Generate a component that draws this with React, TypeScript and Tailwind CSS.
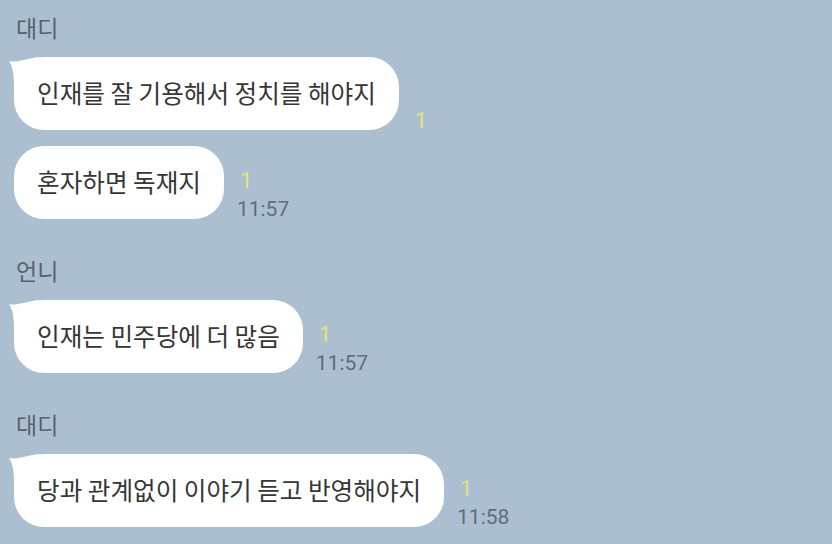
const font = { fontFamily: '"Noto Sans CJK KR", "Noto Sans", sans-serif' };

type Msg = { text: string; time?: string; tail?: boolean };
type Group = { name: string; msgs: Msg[] };

const groups: Group[] = [
  {
    name: "대디",
    msgs: [
      { text: "인재를 잘 기용해서 정치를 해야지", tail: true },
      { text: "혼자하면 독재지", time: "11:57" },
    ],
  },
  {
    name: "언니",
    msgs: [{ text: "인재는 민주당에 더 많음", time: "11:57", tail: true }],
  },
  {
    name: "대디",
    msgs: [{ text: "당과 관계없이 이야기 듣고 반영해야지", time: "11:58", tail: true }],
  },
];

function Tail() {
  return (
    <svg className="absolute left-[-6px] top-0" width="32" height="32" viewBox="0 0 32 32">
      <path d="M1 4 C 8 6, 16 2, 30 0 L 30 30 L 6 30 C 6 18, 5 10, 1 4 Z" fill="#ffffff" />
    </svg>
  );
}

function Bubble({ msg }: { msg: Msg }) {
  return (
    <div className="flex items-end gap-[13px]">
      <div className="relative">
        {msg.tail && <Tail />}
        <div className="relative flex h-[73px] items-center rounded-[30px] bg-white px-[23px] pb-[3px] text-[24.6px] text-[#363636]">
          {msg.text}
        </div>
      </div>
      <div className="flex flex-col items-start" style={{ fontFamily: "Roboto, sans-serif" }}>
        <span className={`pl-[3px] text-[22px] leading-[24px] text-[#e4e27a] ${msg.time ? "mb-[4px]" : "mb-[-3px]"}`}>1</span>
        {msg.time && (
          <span className="mb-[-2px] text-[21px] leading-[24px] text-[#5f6d7c]">{msg.time}</span>
        )}
      </div>
    </div>
  );
}

export default function App() {
  return (
    <div className="h-[544px] w-[832px] overflow-hidden bg-[#abbfd1] pl-[14px] pt-[12px]" style={font}>
      <div className="flex flex-col gap-[36px]">
        {groups.map((g, i) => (
          <div key={i} className="flex flex-col">
            <div className="mb-[15px] pl-[2px] text-[23px] leading-[30px] text-[#56616d]">{g.name}</div>
            <div className="flex flex-col gap-[16px]">
              {g.msgs.map((m, j) => (
                <Bubble key={j} msg={m} />
              ))}
            </div>
          </div>
        ))}
      </div>
    </div>
  );
}
